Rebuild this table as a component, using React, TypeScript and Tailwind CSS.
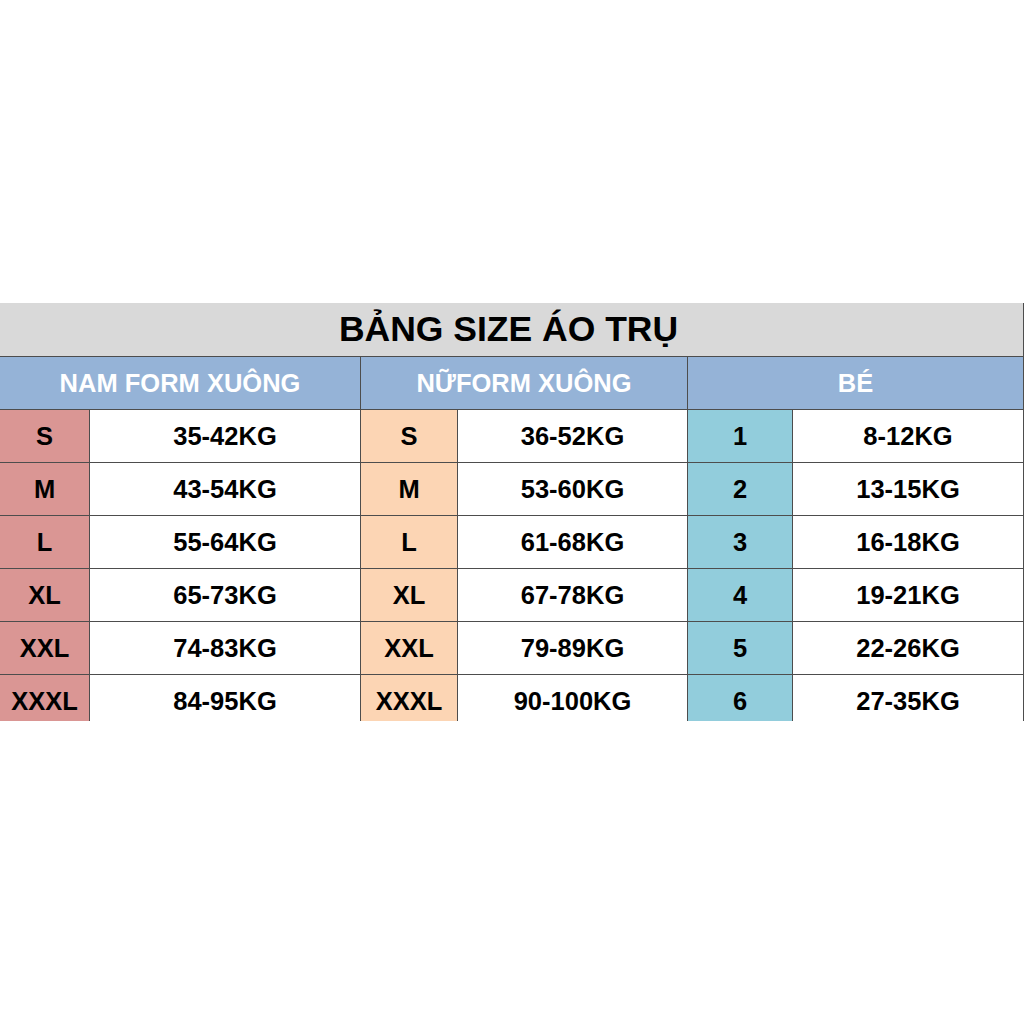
import React from 'react';

// size chart data: [size, weight] per group
const nam = [
  ['S', '35-42KG'],
  ['M', '43-54KG'],
  ['L', '55-64KG'],
  ['XL', '65-73KG'],
  ['XXL', '74-83KG'],
  ['XXXL', '84-95KG'],
];

const nu = [
  ['S', '36-52KG'],
  ['M', '53-60KG'],
  ['L', '61-68KG'],
  ['XL', '67-78KG'],
  ['XXL', '79-89KG'],
  ['XXXL', '90-100KG'],
];

const be = [
  ['1', '8-12KG'],
  ['2', '13-15KG'],
  ['3', '16-18KG'],
  ['4', '19-21KG'],
  ['5', '22-26KG'],
  ['6', '27-35KG'],
];

const groups = [
  { rows: nam, bg: 'bg-[#da9694]' },
  { rows: nu, bg: 'bg-[#fcd5b4]' },
  { rows: be, bg: 'bg-[#92cddc]' },
];

export default function App() {
  return (
    <div
      className="w-[1024px] h-[1024px] bg-white pt-[303px]"
      style={{ fontFamily: '"Liberation Sans", Arial, sans-serif' }}
    >
      {/* the sheet is cut off mid-way through the last row */}
      <div className="h-[418px] overflow-hidden">
        <div className="grid grid-cols-[90px_271px_97px_230px_105px_231px] text-black font-bold">
          {/* Title */}
          <div className="col-span-6 h-[54px] bg-[#d9d9d9] border-b border-r border-[#4d4d4d] flex items-center justify-center text-[35.5px] leading-none pt-[1px] pr-[6px]">
            BẢNG SIZE ÁO TRỤ
          </div>

          {/* Group headers */}
          <div className="col-span-2 h-[53px] bg-[#95b3d7] border-b border-r border-[#4d4d4d] flex items-center justify-center text-white text-[25.5px] leading-none pt-[1px]">
            NAM FORM XUÔNG
          </div>
          <div className="col-span-2 h-[53px] bg-[#95b3d7] border-b border-r border-[#4d4d4d] flex items-center justify-center text-white text-[25.5px] leading-none pt-[1px]">
            NỮFORM XUÔNG
          </div>
          <div className="col-span-2 h-[53px] bg-[#95b3d7] border-b border-r border-[#4d4d4d] flex items-center justify-center text-white text-[25.5px] leading-none pt-[1px]">
            BÉ
          </div>

          {/* Body rows */}
          {nam.map((_, i) =>
            groups.map((g, gi) => (
              <React.Fragment key={`${i}-${gi}`}>
                <div
                  className={`${g.bg} h-[53px] border-b border-r border-[#4d4d4d] flex items-center justify-center text-[25.5px] leading-none pt-[1px]`}
                >
                  {g.rows[i][0]}
                </div>
                <div className="bg-white h-[53px] border-b border-r border-[#4d4d4d] flex items-center justify-center text-[25.5px] leading-none pt-[1px]">
                  {g.rows[i][1]}
                </div>
              </React.Fragment>
            ))
          )}
        </div>
      </div>
    </div>
  );
}
